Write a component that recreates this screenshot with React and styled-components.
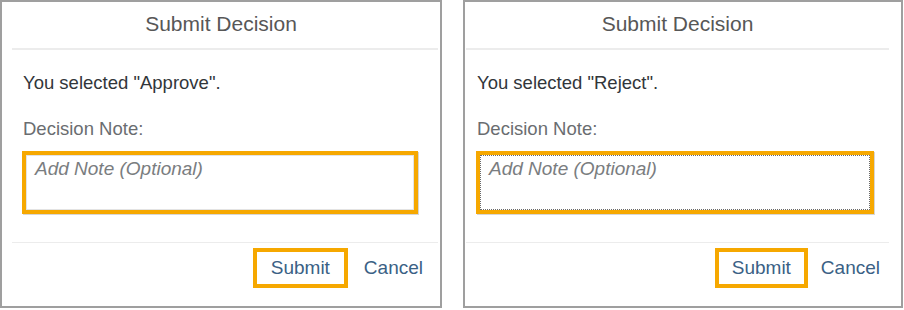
import React from "react";
import styled, { createGlobalStyle } from "styled-components";

const GlobalStyle = createGlobalStyle`
  html, body {
    margin: 0;
    padding: 0;
    background: #ffffff;
  }
  body {
    font-family: "Liberation Sans", Arial, sans-serif;
  }
`;

const ORANGE = "#f6a800";

const Page = styled.div`
  display: flex;
  gap: 21px;
  align-items: flex-start;
`;

const Dialog = styled.section`
  box-sizing: border-box;
  width: ${p => p.$width}px;
  height: 308px;
  border: 2px solid #9f9f9f;
  background: #ffffff;
  display: flex;
  flex-direction: column;
`;

const Header = styled.header`
  height: 46px;
  box-sizing: border-box;
  padding: 0 ${p => p.$right}px 2px ${p => p.$left}px;
  display: flex;
  align-items: center;
  justify-content: center;
`;

const Title = styled.h2`
  margin: 0;
  font-size: 21px;
  font-weight: normal;
  line-height: 24px;
  color: #575757;
`;

const Rule = styled.div`
  height: ${p => p.$thick}px;
  margin: 0 ${p => p.$right}px 0 ${p => p.$left}px;
  background: #ececec;
`;

const Body = styled.div`
  padding: 21px ${p => p.$right}px 28px ${p => p.$left}px;
  display: flex;
  flex-direction: column;
`;

const Message = styled.p`
  margin: 0 0 22px 1px;
  font-size: 18.5px;
  line-height: 24px;
  color: #32363a;
`;

const Label = styled.label`
  margin: 0 0 10px 1px;
  font-size: 18.5px;
  line-height: 24px;
  color: #6a6d70;
`;

const Highlight = styled.div`
  box-sizing: border-box;
  height: 63px;
  border: 4px solid ${ORANGE};
  box-shadow: 1px 1px 0 #d6d6d6;
  display: flex;
`;

const NoteInput = styled.textarea`
  flex: 1;
  box-sizing: border-box;
  margin: 0;
  border: 1px ${p => (p.$focused ? "dotted #6b6b6b" : "solid #e3e3e3")};
  padding: 1px 8px;
  resize: none;
  outline: none;
  font-family: "Liberation Sans", Arial, sans-serif;
  font-size: 19px;
  line-height: 24px;
  color: #32363a;
  background: #ffffff;

  &::placeholder {
    color: #7a7d80;
    font-style: italic;
    opacity: 1;
  }
`;

const Footer = styled.footer`
  padding: 5px ${p => p.$right}px 0 0;
  display: flex;
  justify-content: flex-end;
  align-items: center;
  gap: ${p => p.$gap}px;
`;

const SubmitButton = styled.button`
  box-sizing: border-box;
  width: ${p => p.$width}px;
  height: 40px;
  margin: 0;
  padding: 0;
  border: 4px solid ${ORANGE};
  background: #ffffff;
  font-family: "Liberation Sans", Arial, sans-serif;
  font-size: 19px;
  color: #3a6185;
  cursor: pointer;
`;

const LinkButton = styled.button`
  margin: 0;
  padding: 0;
  border: none;
  background: none;
  font-family: "Liberation Sans", Arial, sans-serif;
  font-size: 19px;
  line-height: 40px;
  color: #3a6185;
  cursor: pointer;
`;

const dialogs = [
  {
    choice: "Approve",
    width: 442,
    title: [0, 0],
    rule: [10, 2],
    body: [20, 22],
    footerRight: 17,
    gap: 16,
    button: 95,
    focused: false,
  },
  {
    choice: "Reject",
    width: 440,
    title: [1, 12],
    rule: [1, 12],
    body: [11, 27],
    footerRight: 21,
    gap: 13,
    button: 93,
    focused: true,
  },
];

function DecisionDialog({ d }) {
  return (
    <Dialog $width={d.width}>
      <Header $left={d.title[0]} $right={d.title[1]}>
        <Title>Submit Decision</Title>
      </Header>
      <Rule $thick={2} $left={d.rule[0]} $right={d.rule[1]} />
      <Body $left={d.body[0]} $right={d.body[1]}>
        <Message>You selected "{d.choice}".</Message>
        <Label>Decision Note:</Label>
        <Highlight>
          <NoteInput placeholder="Add Note (Optional)" $focused={d.focused} />
        </Highlight>
      </Body>
      <Rule $thick={1} $left={d.rule[0]} $right={d.rule[1]} />
      <Footer $right={d.footerRight} $gap={d.gap}>
        <SubmitButton $width={d.button}>Submit</SubmitButton>
        <LinkButton>Cancel</LinkButton>
      </Footer>
    </Dialog>
  );
}

export default function App() {
  return (
    <>
      <GlobalStyle />
      <Page>
        {dialogs.map(d => (
          <DecisionDialog key={d.choice} d={d} />
        ))}
      </Page>
    </>
  );
}
